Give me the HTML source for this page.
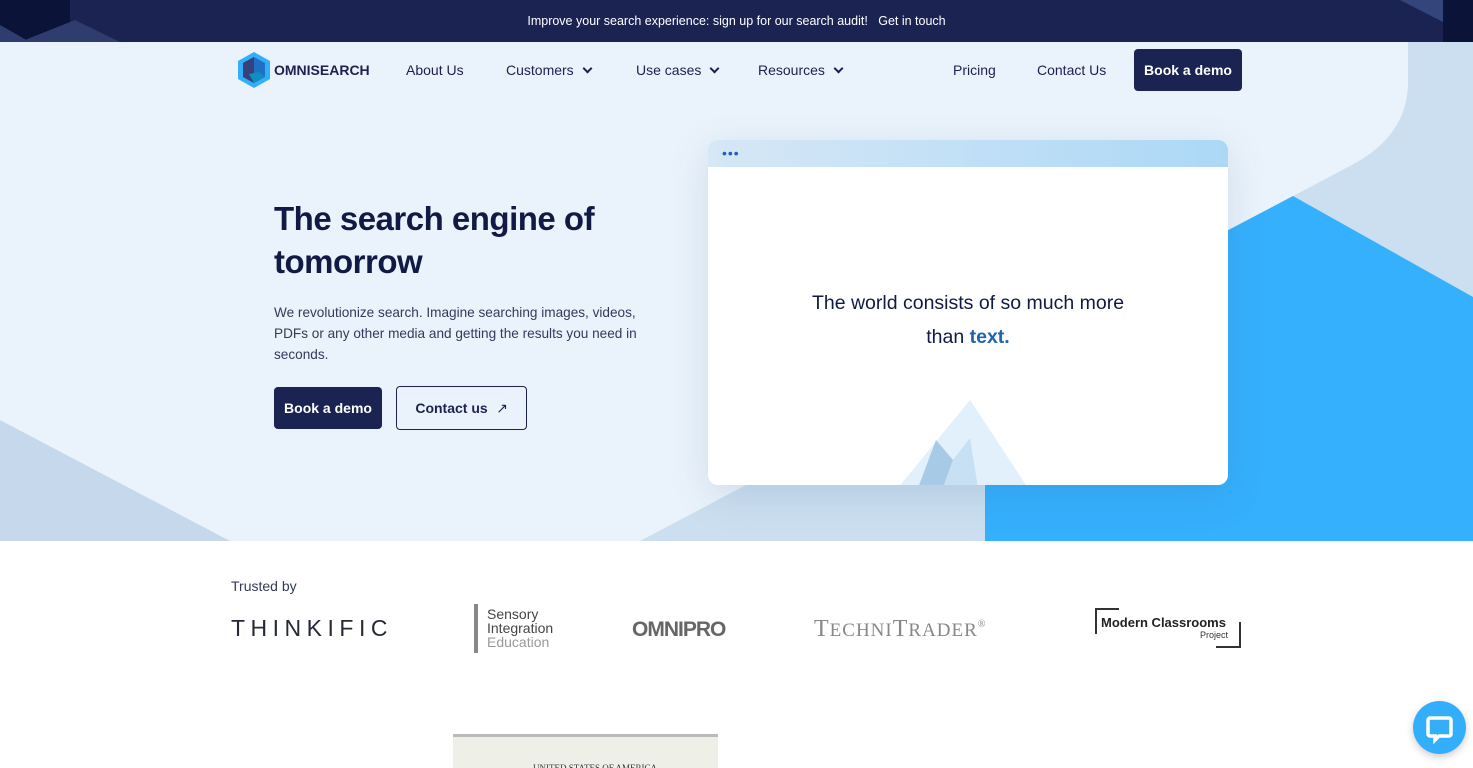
<!DOCTYPE html>
<html><head><meta charset="utf-8"><style>
*{margin:0;padding:0;box-sizing:border-box}
body{width:1473px;height:768px;overflow:hidden;font-family:"Liberation Sans",sans-serif;background:#fff;position:relative;color:#1b2150}
.top{position:absolute;left:0;top:0;width:1473px;height:42px;background:#1b2352;color:#fff;font-size:12.5px;text-align:center;line-height:42px;overflow:hidden}
.hero{position:absolute;left:0;top:42px;width:1473px;height:499px;background:#eaf3fb;overflow:hidden}
.nav a{position:absolute;top:62px;font-size:14px;color:#1b2150;text-decoration:none}
.chev{display:inline-block;width:7px;height:7px;border-right:2px solid #1b2150;border-bottom:2px solid #1b2150;transform:rotate(45deg);margin-left:10px;position:relative;top:-3px}
.btn{position:absolute;border-radius:4px;font-size:14px;font-weight:bold;text-align:center}
.card{position:absolute;left:708px;top:140px;width:520px;height:345px;background:#fff;border-radius:10px;overflow:hidden;box-shadow:0 10px 40px rgba(60,90,140,.15)}
.cardbar{height:27px;background:linear-gradient(90deg,#d6e7f6,#acd8f6);position:relative}
.logo{position:absolute;color:#555}
</style></head><body>
<div class="top">
<svg style="position:absolute;left:0;top:0" width="1473" height="42"><polygon points="0,0 70,0 70,42 0,42" fill="#0c1338"/><polygon points="20,42 75,20 120,42" fill="#2e3d6e"/><polygon points="0,25 30,42 0,42" fill="#2e3d6e"/><polygon points="1400,0 1443,0 1443,22" fill="#33457a"/><rect x="1443" y="0" width="30" height="42" fill="#0c1338"/></svg>
<span style="position:relative">Improve your search experience: sign up for our search audit! &nbsp; Get in touch</span></div>
<div class="hero">
<svg style="position:absolute;left:0;top:0" width="1473" height="499">
<path d="M1408,0 L1473,0 L1473,499 L640,499 L1350,124 Q1408,94 1408,40 Z" fill="#cbdff0"/>
<polygon points="1293,154 1473,255 1473,499 985,499 985,316" fill="#35b0fc"/>
<polygon points="0,378 230,499 0,499" fill="#c6d9ec"/>
</svg>
</div>
<svg style="position:absolute;left:237px;top:52px" width="34" height="36" viewBox="0 0 34 36"><polygon points="17,0 33,9 33,27 17,36 1,27 1,9" fill="#33aefb"/><polygon points="17,5 28,11 28,25 17,31 6,25 6,11" fill="#1e6fc6"/><polygon points="6,11 17,5 17,31 6,25" fill="#34417a"/><polygon points="12,22 22,20 28,25 17,31" fill="#0e8fbf"/></svg>
<div style="position:absolute;left:274px;top:62px;font-weight:bold;font-size:14px">OMNISEARCH</div>
<div class="nav"><a style="left:406px">About Us</a><a style="left:506px">Customers<span class="chev"></span></a><a style="left:636px">Use cases<span class="chev"></span></a><a style="left:758px">Resources<span class="chev"></span></a><a style="left:953px">Pricing</a><a style="left:1037px">Contact Us</a></div>
<div class="btn" style="left:1134px;top:49px;width:108px;height:42px;line-height:42px;background:#1b2352;color:#fff">Book a demo</div>
<div style="position:absolute;left:274px;top:197px;font-size:33px;font-weight:bold;line-height:43px;color:#111a44;letter-spacing:-0.5px">The search engine of<br>tomorrow</div>
<div style="position:absolute;left:274px;top:302px;width:375px;font-size:13.6px;line-height:21px;color:#333a5a">We revolutionize search. Imagine searching images, videos, PDFs or any other media and getting the results you need in seconds.</div>
<div class="btn" style="left:274px;top:387px;width:108px;height:42px;line-height:42px;background:#1b2352;color:#fff">Book a demo</div>
<div class="btn" style="left:396px;top:386px;width:131px;height:44px;line-height:42px;border:1px solid #1b2352;color:#1b2352;padding-right:20px">Contact us<span style="position:absolute;right:18px;font-weight:normal">↗</span></div>
<div class="card"><div class="cardbar"><span style="position:absolute;left:14px;top:5px;color:#1e5fb8;font-size:14px;letter-spacing:1px">•••</span></div>
<div style="position:absolute;top:146px;width:520px;text-align:center;font-size:19.5px;line-height:34px;color:#111a44">The world consists of so much more<br>than <b style="color:#1e64b4">text.</b></div>
<svg style="position:absolute;left:190px;top:258px" width="130" height="90"><polygon points="72,2 130,90 0,90" fill="#e2f0fb"/><polygon points="38,42 55,62 45,90 20,90" fill="#a7cbe6"/><polygon points="55,62 72,40 80,90 45,90" fill="#c7e0f3"/></svg>
</div>
<div style="position:absolute;left:231px;top:578px;font-size:14px;color:#333a5a">Trusted by</div>
<div class="logo" style="left:231px;top:615px;font-size:23px;letter-spacing:5.5px;color:#252b35">THINKIFIC</div>
<div style="position:absolute;left:474px;top:604px;width:4px;height:49px;background:#888"></div>
<div class="logo" style="left:487px;top:607px;font-size:14px;line-height:14px;color:#444">Sensory<br>Integration<br><span style="color:#999">Education</span></div>
<div class="logo" style="left:632px;top:618px;font-size:21px;font-weight:bold;color:#666;letter-spacing:-1px">OMNIPRO</div>
<div class="logo" style="left:814px;top:616px;font-family:'Liberation Serif',serif;font-size:24px;color:#888;letter-spacing:1px">T<span style="font-size:19px">ECHNI</span>T<span style="font-size:19px">RADER</span><sup style="font-size:10px">®</sup></div>
<div style="position:absolute;left:1095px;top:608px;width:24px;height:26px;border-left:2px solid #333;border-top:2px solid #333"></div>
<div style="position:absolute;left:1216px;top:622px;width:25px;height:26px;border-right:2px solid #333;border-bottom:2px solid #333"></div>
<div class="logo" style="left:1101px;top:615px;font-size:13px;font-weight:bold;color:#222">Modern Classrooms</div>
<div class="logo" style="left:1200px;top:630px;font-size:9px;color:#333">Project</div>
<div style="position:absolute;left:453px;top:734px;width:265px;height:34px;background:#eef0e8;border-top:3px solid #bbb;font-family:'Liberation Serif',serif;font-size:9px;color:#333;padding:26px 0 0 80px;overflow:hidden">UNITED STATES OF AMERICA</div>
<div style="position:absolute;left:1413px;top:701px;width:53px;height:53px;border-radius:50%;background:#33aefb;box-shadow:0 3px 8px rgba(0,0,0,.2)"><svg width="53" height="53"><path d="M17,17 h19 a2,2 0 0 1 2,2 v14 a2,2 0 0 1 -2,2 h-10 l-4,4 v-4 h-5 a2,2 0 0 1 -2,-2 v-14 a2,2 0 0 1 2,-2z" fill="none" stroke="#fff" stroke-width="3.5"/></svg></div>
</body></html>
